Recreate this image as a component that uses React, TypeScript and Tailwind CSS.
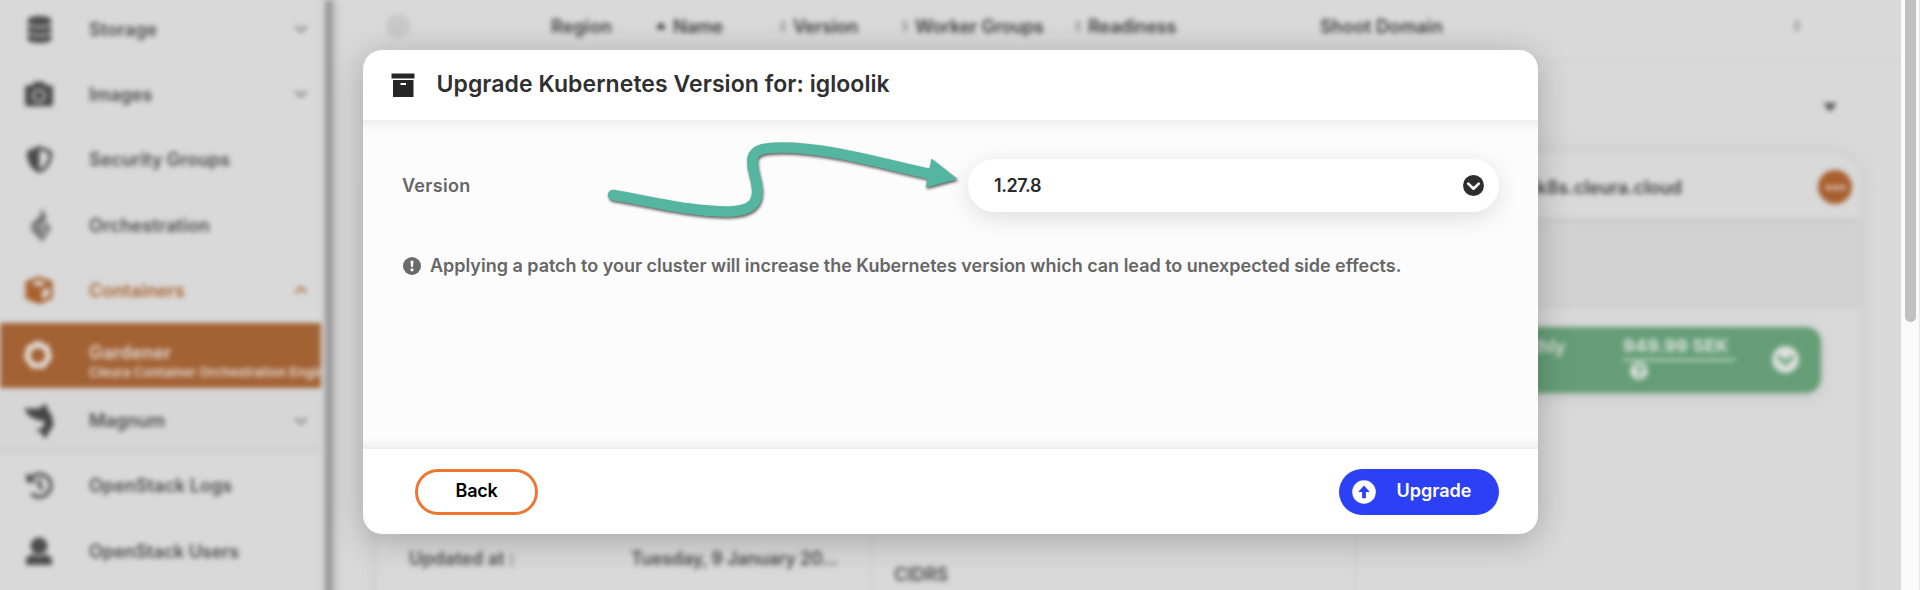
import type { ReactNode } from "react";
import { FaCamera, FaDatabase, FaHistory, FaQuestionCircle } from "react-icons/fa";
import { FaShieldHalved } from "react-icons/fa6";

function Chevron({ up = false, className = "" }: { up?: boolean; className?: string }) {
  return (
    <svg viewBox="0 0 16 10" className={`h-[10px] w-4 ${className}`} fill="none" stroke="currentColor" strokeWidth="2.2">
      <path d={up ? "M2.500 8 8 2.500 13.500 8" : "M2.500 2 8 7.500 13.500 2"} />
    </svg>
  );
}

function CircleChevron({ className = "", mark = "#fff" }: { className?: string; mark?: string }) {
  return (
    <svg viewBox="0 0 20 20" className={className}>
      <circle cx="10" cy="10" r="10" fill="currentColor" />
      <path d="M5 8.2 10 13l5-4.8" fill="none" stroke={mark} strokeWidth="2.6" strokeLinecap="round" strokeLinejoin="round" />
    </svg>
  );
}

function FlameIcon() {
  return (
    <svg viewBox="0 0 24 34" className="h-[34px] w-6" fill="none" stroke="#6a6a6a" strokeWidth="3.2">
      <path d="M15.500 2v6L6 17v5l4 3" />
      <path d="M19 8l-5 6-4 5 1.500 5" />
      <path d="M17 15l5 5-7 11-4-4 6-8" />
    </svg>
  );
}

function BoxIcon() {
  return (
    <svg viewBox="0 0 28 28" className="h-7 w-7">
      <path d="M14 1.500 26.500 6v16L14 27 1.500 22V6z" fill="#a9622f" stroke="#a9622f" strokeWidth="2" strokeLinejoin="round" />
      <path d="M6 7.200 14 4.200l8 3-8 3.200z" fill="#dadada" />
      <path d="M17 14.500l7-3v8.500l-7 3.200z" fill="#dadada" />
    </svg>
  );
}

function GardenerIcon() {
  return (
    <svg viewBox="0 0 30 30" className="mr-[2px] h-[30px] w-[30px]">
      <path
        d="M15 2 25 7l2.500 10.500L20.500 27h-11L2.500 17.500 5 7z"
        fill="#e4dcd6"
        stroke="#e4dcd6"
        strokeWidth="3"
        strokeLinejoin="round"
      />
      <circle cx="15" cy="15.500" r="7.500" fill="#a36234" />
    </svg>
  );
}

function BirdIcon() {
  return (
    <svg viewBox="0 0 30 36" className="h-9 w-[30px]" fill="#464646">
      <path d="M0 5.500h15L22 .500 24 7l4 6 1.500 9-5 8-3.500 6-3.500-6-6-3 6-1.500 3-4-.500-3.500-7-1L5 13z" />
    </svg>
  );
}

function UserIcon() {
  return (
    <svg viewBox="0 0 28 28" className="h-7 w-7" fill="#4c4c4c">
      <circle cx="14" cy="9" r="8.500" />
      <path d="M1 28v-5q0-4 5-5l3-.6q5 3 10 0l3 .6q5 1 5 5v5z" />
    </svg>
  );
}

function SideRow({
  icon,
  label,
  tracking,
  chevron,
  active = false,
}: {
  icon: ReactNode;
  label: string;
  tracking: string;
  chevron?: "up" | "down";
  active?: boolean;
}) {
  return (
    <div className={`flex h-[65.300px] items-center ${active ? "text-[#a9622f]" : "text-[#4c4c4c]"}`}>
      <div className="flex w-[78px] shrink-0 justify-center">{icon}</div>
      <span className={`ml-[11px] flex-1 text-[18px] font-semibold ${tracking}`}>{label}</span>
      {chevron && <Chevron up={chevron === "up"} className={active ? "mr-[12.500px]" : "mr-[12.500px] text-[#7c7c7c]"} />}
    </div>
  );
}

function Sidebar() {
  return (
    <aside className="w-[321px] shrink-0">
      <div className="-mt-[3.500px]">
        <SideRow icon={<FaDatabase size={27} />} label="Storage" tracking="tracking-[0px]" chevron="down" />
        <SideRow icon={<FaCamera size={28} />} label="Images" tracking="tracking-[0px]" chevron="down" />
        <SideRow icon={<FaShieldHalved size={27} />} label="Security Groups" tracking="tracking-[0px]" />
        <SideRow icon={<FlameIcon />} label="Orchestration" tracking="tracking-[0.12px]" />
        <SideRow icon={<BoxIcon />} label="Containers" tracking="tracking-[0.03px]" chevron="up" active />
      </div>
      <div className="flex h-[65px] items-center overflow-hidden bg-[#a36234] text-[#e4dcd6]">
        <div className="flex w-[78px] shrink-0 justify-center">
          <GardenerIcon />
        </div>
        <div className="ml-[11px] pt-[11px] whitespace-nowrap">
          <div className="text-[18px] leading-[22px] font-semibold tracking-[0.17px]">Gardener</div>
          <div className="text-[13px] leading-4 font-semibold tracking-[0.05px]">Cleura Container Orchestration Engine</div>
        </div>
      </div>
      <div className="bg-[#d6d6d6] shadow-[inset_0_-7px_6px_-4px_#cbcbcb]">
        <SideRow icon={<BirdIcon />} label="Magnum" tracking="tracking-[-0.05px]" chevron="down" />
      </div>
      <SideRow icon={<FaHistory size={27} />} label="OpenStack Logs" tracking="tracking-[0.03px]" />
      <SideRow icon={<UserIcon />} label="OpenStack Users" tracking="tracking-[-0.08px]" />
    </aside>
  );
}

function Sort({ up = false }: { up?: boolean }) {
  return up ? (
    <svg viewBox="0 0 10 14" className="h-[14px] w-[10px]">
      <path d="M0 10 5 3l5 7z" fill="#333" />
    </svg>
  ) : (
    <svg viewBox="0 0 10 14" className="h-[14px] w-[10px]">
      <path d="M1.500 6 5 1 8.500 6zM1.500 8 5 13 8.500 8z" fill="#979797" />
    </svg>
  );
}

function Column({ label, width, sort, tracking }: { label: string; width: string; sort?: "up" | "both"; tracking: string }) {
  return (
    <div className={`flex shrink-0 items-center ${width}`}>
      {sort && (
        <div className={sort === "up" ? "mr-[7px] flex" : "mr-[5px] ml-[2px] flex"}>
          <Sort up={sort === "up"} />
        </div>
      )}
      <span className={`whitespace-nowrap ${tracking}`}>{label}</span>
    </div>
  );
}

function ClusterTable() {
  return (
    <main className="w-[1568px] shrink-0">
      <div className="flex h-[62px] items-center border-b border-[#d4d4d4] pb-[9px] text-[18px] font-semibold text-[#404040]">
        <div className="mr-[141px] ml-[53px] size-6 rounded-full bg-[#c8c8c8]" />
        <Column label="Region" width="w-[105px]" tracking="tracking-[0.15px]" />
        <Column label="Name" width="w-[120px]" sort="up" tracking="tracking-[-0.25px]" />
        <Column label="Version" width="w-[122px]" sort="both" tracking="tracking-[-0.2px]" />
        <Column label="Worker Groups" width="w-[173px]" sort="both" tracking="tracking-[-0.2px]" />
        <Column label="Readiness" width="w-[249px]" sort="both" tracking="tracking-[-0.2px]" />
        <Column label="Shoot Domain" width="w-[472px]" tracking="tracking-[0.08px]" />
        <Sort />
      </div>
      <div className="flex h-[90px] items-center justify-end pr-[64px]">
        <svg viewBox="0 0 14 9" className="h-[9px] w-[14px]">
          <path d="M0 0h14L7 9z" fill="#555" />
        </svg>
      </div>
      <section className="ml-[44px] h-[500px] w-[1484px] overflow-hidden rounded-t-[30px] shadow-[0_0_16px_2px_#cbcbcb]">
        <div className="flex h-[66px] items-center justify-end pt-1 pr-[9px] text-[#404040]">
          <span className="mr-[136px] text-[18px] font-semibold tracking-[-0.02px]">k8s.cleura.cloud</span>
          <div className="flex size-[34px] items-center justify-center gap-[2px] rounded-full bg-[#a85f2f]">
            <i className="size-[5px] rounded-full bg-[#dcd0c6]" />
            <i className="size-[5px] rounded-full bg-[#dcd0c6]" />
            <i className="size-[5px] rounded-full bg-[#dcd0c6]" />
          </div>
        </div>
        <div className="h-[91px] bg-[#d2d2d2] shadow-[inset_0_4px_5px_#cacaca]" />
        <div className="grid h-[343px] grid-cols-[495px_484px_505px] text-[18px] font-semibold text-[#4c4c4c]">
          <div className="border-r border-[#cccccc] pt-[236px] pl-[32px]">
            <div className="flex">
              <span className="w-[222px] tracking-[0.02px]">Updated at :</span>
              <span className="tracking-[-0.32px]">Tuesday, 9 January 20...</span>
            </div>
          </div>
          <div className="border-r border-[#cccccc] pt-[252px] pl-[22px] tracking-[-0.1px]">CIDRS</div>
          <div className="pt-[18px] pl-10">
            <div className="flex h-[66px] w-[425px] rounded-[15px] bg-[#659e76] pr-[22px] text-[#dbe1dc] shadow-[0_4px_14px_#c4c4c4]">
              <div className="flex-1 pt-[6px] pl-[98px]">Monthly</div>
              <div className="w-[149px] pt-[6px]">
                <div className="w-[112px] border-b-2 border-[#cddbd0] leading-[26px] font-bold tracking-[0.15px]">949.99 SEK</div>
                <FaQuestionCircle size={18} className="mt-[1px] ml-[7px]" />
              </div>
              <CircleChevron mark="#659e76" className="mt-[19px] size-[27px]" />
            </div>
          </div>
        </div>
      </section>
    </main>
  );
}

function ArchiveIcon() {
  return (
    <svg viewBox="0 0 24 24" className="size-6" fill="#262626">
      <path d="M.5 .500h23v5H.5z" />
      <path fillRule="evenodd" d="M2 7h20.500v16.500a.8.8 0 0 1-.8.8H2.800a.8.8 0 0 1-.8-.8zM9.500 10v2h5.500v-2z" />
    </svg>
  );
}

function AlertIcon() {
  return (
    <svg viewBox="0 0 18 18" className="size-[18px]">
      <circle cx="9" cy="9" r="9" fill="#6b6b6b" />
      <path d="M7.500 3.800h3L10 10H8z" fill="#fcfcfc" />
      <circle cx="9" cy="12.800" r="1.600" fill="#fcfcfc" />
    </svg>
  );
}

function UploadIcon() {
  return (
    <svg viewBox="0 0 24 24" className="size-6">
      <circle cx="12" cy="12" r="11.800" fill="#fff" />
      <path d="M12 5.500 17.800 12h-3.900v6.300h-3.800V12H6.200z" fill="#2c41f5" />
    </svg>
  );
}

function Pointer() {
  return (
    <svg
      viewBox="590 130 400 100"
      className="pointer-events-none absolute top-[80px] left-[227px] h-[100px] w-[400px] drop-shadow-[1px_2px_1.500px_rgba(0,0,0,0.6)]"
    >
      <path
        d="M613 195C650 201 692 212 729 211.500C750 211 758.500 204 757 188C756 176 751 170 752.500 158C754.500 150 763 147.500 781 147.500C828 147.500 880 163 930 174"
        fill="none"
        stroke="#54b6a1"
        strokeWidth="10.500"
        strokeLinecap="round"
      />
      <path d="M931.500 158.500 957.500 179 925.500 187.500z" fill="#54b6a1" />
    </svg>
  );
}

function UpgradeDialog() {
  return (
    <div
      role="dialog"
      className="absolute top-[50px] left-[363px] flex h-[484px] w-[1175px] flex-col rounded-[19px] bg-white shadow-[0_6px_34px_rgba(0,0,0,0.24)]"
    >
      <header className="flex h-[70px] shrink-0 items-center pb-[1px] pl-[27.500px]">
        <ArchiveIcon />
        <h1 className="ml-[22px] text-[23px] font-semibold tracking-[0.06px] text-[#303030]">
          Upgrade Kubernetes Version for: igloolik
        </h1>
      </header>
      <div className="flex-1 bg-[#fcfcfc] pr-[39px] pl-[39px] shadow-[inset_0_16px_14px_-14px_rgba(0,0,0,0.09),inset_0_-16px_14px_-14px_rgba(0,0,0,0.09)]">
        <div className="flex items-center justify-between pt-[39px]">
          <span className="text-[18px] font-semibold tracking-[0.3px] text-[#666]">Version</span>
          <div className="flex h-[53px] w-[531px] items-center justify-between rounded-full bg-white pr-[15.500px] pl-[26px] shadow-[0_6px_24px_rgba(0,0,0,0.12)]">
            <span className="text-[18px] font-semibold tracking-[-0.4px] text-[#2b2b2b]">1.27.8</span>
            <CircleChevron className="size-[21px] text-[#2e2e2e]" />
          </div>
        </div>
        <div className="mt-[40px] flex items-center pl-[1px] text-[#666]">
          <AlertIcon />
          <p className="ml-[9px] text-[18px] font-semibold tracking-[-0.015px] whitespace-nowrap">
            Applying a patch to your cluster will increase the Kubernetes version which can lead to unexpected side effects.
          </p>
        </div>
      </div>
      <footer className="flex h-[85px] shrink-0 items-center justify-between pr-[39px] pl-[52px]">
        <button className="h-[46px] w-[123px] rounded-full border-[3px] border-[#ef7630] pb-[2px] text-[18px] font-semibold tracking-[-0.25px] text-black">
          Back
        </button>
        <button className="flex h-[46px] w-[160px] items-center rounded-full bg-[#2c41f5] pl-[12.500px] text-[18px] font-semibold tracking-[-0.02px] text-white">
          <UploadIcon />
          <span className="ml-[21px] pb-[2px]">Upgrade</span>
        </button>
      </footer>
      <Pointer />
    </div>
  );
}

export default function App() {
  return (
    <div className="relative flex h-[590px] w-[1920px] overflow-hidden bg-[#d9d9d9] font-['Inter',sans-serif]">
      <div className="flex h-[590px] w-[1901px] shrink-0 overflow-hidden">
        <div className="flex h-[620px] w-[1901px] shrink-0 blur-[2.500px]">
          <Sidebar />
          <div className="ml-[4px] w-[8px] shrink-0 bg-[#9c9c9c] shadow-[2px_0_10px_#b8b8b8]" />
          <ClusterTable />
        </div>
      </div>
      <div className="flex w-[19px] shrink-0 border-r border-[#e8e8e8] bg-[#fafafa] pl-[4px]">
        <div className="h-[322px] w-[11px] rounded-b-full bg-[#c1c1c1]" />
      </div>
      <UpgradeDialog />
    </div>
  );
}
